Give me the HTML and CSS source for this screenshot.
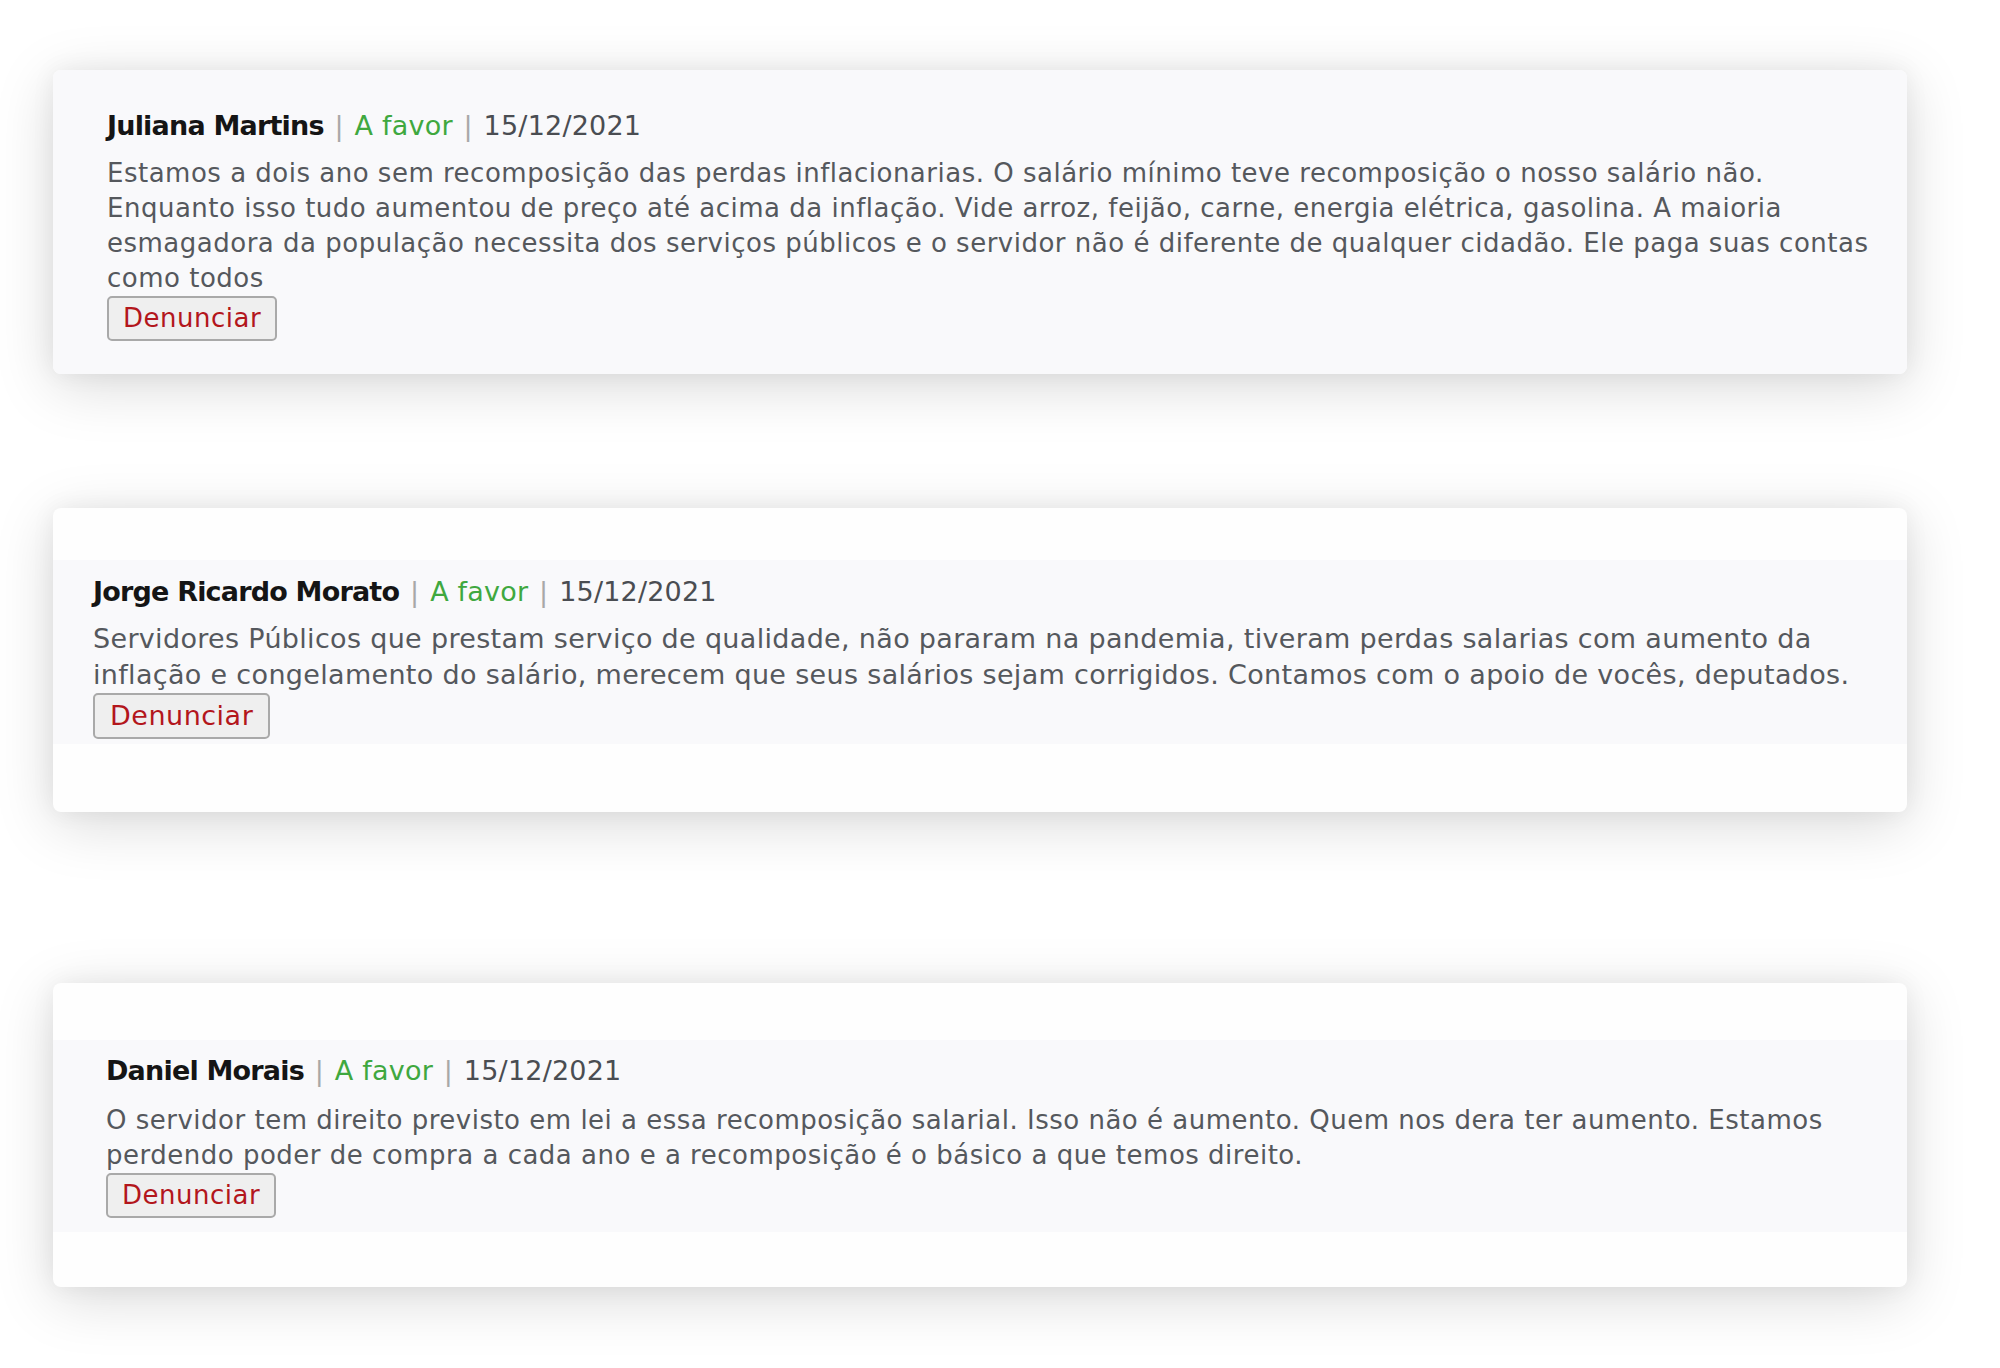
FILE: index.html
```html
<!DOCTYPE html>
<html lang="pt-BR">
<head>
<meta charset="utf-8">
<title>Comentários</title>
<link rel="stylesheet" href="styles.css">
</head>
<body>

<div class="lista">

<!-- comentario 1 -->
<div class="card card1">
  <div class="comentario">
    <div class="cabecalho">
      <span class="autor">Juliana Martins</span>
      <span class="sep">|</span>
      <span class="posicao">A favor</span>
      <span class="sep">|</span>
      <span class="data">15/12/2021</span>
    </div>
    <p class="texto">Estamos a dois ano sem recomposição das perdas inflacionarias. O salário mínimo teve recomposição o nosso salário não. Enquanto isso tudo aumentou de preço até acima da inflação. Vide arroz, feijão, carne, energia elétrica, gasolina. A maioria esmagadora da população necessita dos serviços públicos e o servidor não é diferente de qualquer cidadão. Ele paga suas contas como todos</p>
    <button class="denunciar">Denunciar</button>
  </div>
</div>

<!-- comentario 2 -->
<div class="card card2">
  <div class="comentario">
    <div class="cabecalho">
      <span class="autor">Jorge Ricardo Morato</span>
      <span class="sep">|</span>
      <span class="posicao">A favor</span>
      <span class="sep">|</span>
      <span class="data">15/12/2021</span>
    </div>
    <p class="texto">Servidores Públicos que prestam serviço de qualidade, não pararam na pandemia, tiveram perdas salarias com aumento da inflação e congelamento do salário, merecem que seus salários sejam corrigidos. Contamos com o apoio de vocês, deputados.</p>
    <button class="denunciar">Denunciar</button>
  </div>
</div>

<!-- comentario 3 -->
<div class="card card3">
  <div class="comentario">
    <div class="cabecalho">
      <span class="autor">Daniel Morais</span>
      <span class="sep">|</span>
      <span class="posicao">A favor</span>
      <span class="sep">|</span>
      <span class="data">15/12/2021</span>
    </div>
    <p class="texto">O servidor tem direito previsto em lei a essa recomposição salarial. Isso não é aumento. Quem nos dera ter aumento. Estamos perdendo poder de compra a cada ano e a recomposição é o básico a que temos direito.</p>
    <button class="denunciar">Denunciar</button>
  </div>
</div>

</div>

</body>
</html>
```

FILE: styles.css
```css
body {margin:0; background-color:#ffffff; font-family:Tahoma, "DejaVu Sans", sans-serif;}

.lista {padding:70px 0 81px 53px; width:1854px;}

.card {
	background-color:#fefefe; border-radius:8px;
	box-shadow:0 12px 60px rgba(0,0,0,0.15), 0 0 24px rgba(0,0,0,0.06);
	box-sizing:border-box; height:304px;
}
.card2 {margin-top:134px; padding-top:52px;}
.card3 {margin-top:171px; padding-top:57px;}

.comentario {background-color:#f9f9fb; font-size:26px; letter-spacing:0.5px; color:#55585d;}
.card1 .comentario {height:304px; box-sizing:border-box; border-radius:8px; padding:38px 30px 0 54px;}
.card2 .comentario {padding:14px 30px 5px 40px; font-size:27px; letter-spacing:0.32px;}
.card3 .comentario {padding:13px 30px 14px 53px;}

.cabecalho {font-size:27px; line-height:36px; margin-bottom:12px; letter-spacing:0.2px;}
.card2 .cabecalho {margin-bottom:11px;}
.card3 .cabecalho {margin-bottom:14px;}
.autor {color:#151515; font-weight:bold; letter-spacing:-0.8px;}
.sep {color:#a8a8a8; margin:0 2px;}
.posicao {color:#3fa83f;}
.data {color:#4a4d52;}

.texto {margin:0; line-height:35px;}
.card2 .texto {line-height:36px;}

.denunciar {
	font-family:inherit; font-size:26px; letter-spacing:0.5px; color:#b3161c;
	background-color:#efefef; border:2px solid #a9a9a9; border-radius:5px;
	padding:5px 14px 6px 14px; margin-top:0; cursor:pointer;
}
.card2 .denunciar {font-size:27px; padding:5px 15px 6px 15px;}
```
